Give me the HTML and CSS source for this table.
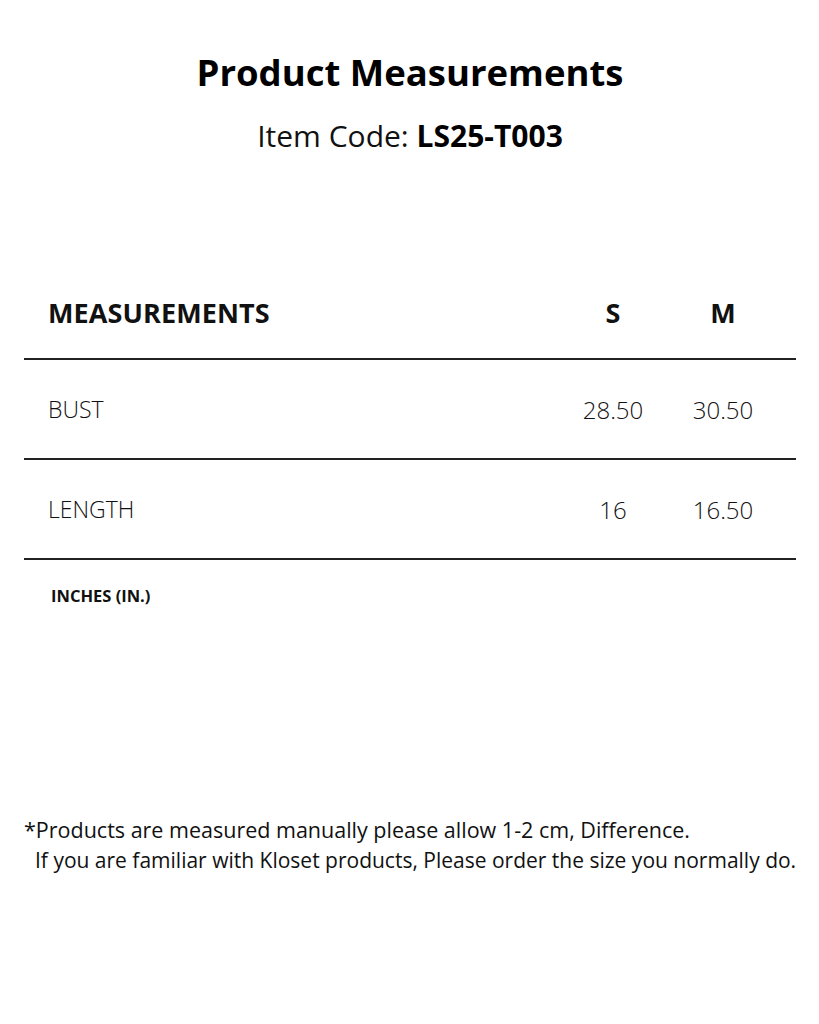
FILE: index.html
```html
<!DOCTYPE html>
<html>
<head>
<meta charset="utf-8">
<link rel="stylesheet" href="styles.css">
</head>
<body>
<div class="page">
  <header class="head">
    <h1 class="title">Product Measurements</h1>
    <p class="code">Item Code: <strong>LS25-T003</strong></p>
  </header>
  <section class="table">
    <div class="row header">
      <div class="label">MEASUREMENTS</div>
      <div class="val">S</div>
      <div class="val">M</div>
    </div>
    <div class="row">
      <div class="label">BUST</div>
      <div class="val">28.50</div>
      <div class="val">30.50</div>
    </div>
    <div class="row">
      <div class="label">LENGTH</div>
      <div class="val">16</div>
      <div class="val">16.50</div>
    </div>
    <div class="unit">INCHES (IN.)</div>
  </section>
  <footer class="note">
    <p class="n1">*Products are measured manually please allow 1-2 cm, Difference.</p>
    <p class="n2">If you are familiar with Kloset products, Please order the size you normally do.</p>
  </footer>
</div>
</body>
</html>
```
FILE: styles.css
```css
html, body { margin: 0; padding: 0; background: #fff; }
body { font-family: "Open Sans", "DejaVu Sans", sans-serif; color: #111; }
.page { width: 819px; height: 1024px; box-sizing: border-box; padding: 0 23px 0 24px; }
.head { text-align: center; padding-top: 47px; }
.title { margin: 0; font-size: 36.5px; line-height: 50px; font-weight: 700; color: #000; }
.code { margin: 19px 0 0; font-size: 30px; line-height: 40px; font-weight: 400; color: #111; }
.code strong { font-weight: 700; color: #000; }
.table { margin-top: 110px; }
.row { display: grid; grid-template-columns: 1fr 110px 110px; align-items: center; height: 98px; border-bottom: 2px solid #222; padding-right: 18px; }
.row.header { height: 92px; }
.label { padding-left: 24px; font-size: 23px; }
.val { text-align: center; font-size: 24px; }
.header .label { font-weight: 700; font-size: 27px; letter-spacing: 0.1px; }
.header .val { font-weight: 700; font-size: 27px; }
.row:not(.header) .label, .row:not(.header) .val { font-weight: 300; }
.unit { padding: 24px 0 0 27px; font-size: 16.5px; font-weight: 700; }
.note { margin-top: 208px; font-size: 21.5px; line-height: 30px; font-weight: 400; white-space: nowrap; }
.note p { margin: 0; }
.n2 { padding-left: 11px; font-size: 21px; }
```
